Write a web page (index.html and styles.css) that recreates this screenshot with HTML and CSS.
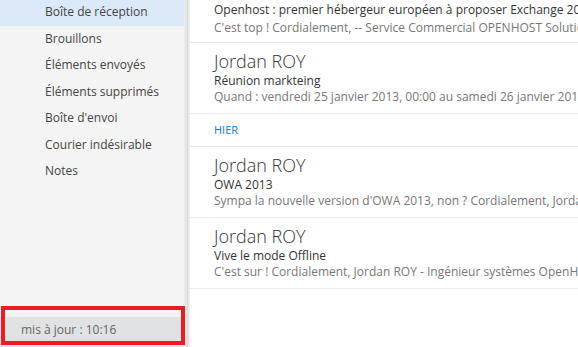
FILE: index.html
```html
<!DOCTYPE html>
<html lang="fr">
<head>
    <meta charset="UTF-8">
    <title>Outlook Web App</title>
    <link rel="stylesheet" href="styles.css">
</head>
<body>

<div class="sidebar">
    <ul class="folders">
        <li class="selected">Boîte de réception</li>
        <li>Brouillons</li>
        <li>Éléments envoyés</li>
        <li>Éléments supprimés</li>
        <li>Boîte d'envoi</li>
        <li>Courier indésirable</li>
        <li>Notes</li>
    </ul>
    <div class="status">mis à jour : 10:16</div>
    <div class="highlight-frame"></div>
</div>

<div class="splitter"></div>

<div class="messages">
    <!-- list is scrolled: the sender line of this one is above the fold -->
    <div class="message first">
        <div class="subject">Openhost : premier hébergeur européen à proposer Exchange 2013</div>
        <div class="preview">C'est top ! Cordialement, -- Service Commercial OPENHOST Solutions</div>
    </div>
    <div class="message">
        <div class="from">Jordan ROY</div>
        <div class="subject">Réunion markteing</div>
        <div class="preview">Quand : vendredi 25 janvier 2013, 00:00 au samedi 26 janvier 2013, 00:00</div>
    </div>
    <div class="group">HIER</div>
    <div class="message">
        <div class="from">Jordan ROY</div>
        <div class="subject">OWA 2013</div>
        <div class="preview">Sympa la nouvelle version d'OWA 2013, non ? Cordialement, Jordan ROY</div>
    </div>
    <div class="message">
        <div class="from">Jordan ROY</div>
        <div class="subject">Vive le mode Offline</div>
        <div class="preview">C'est sur ! Cordialement, Jordan ROY - Ingénieur systèmes OpenHost</div>
    </div>
</div>

</body>
</html>
```

FILE: styles.css
```css
body {
    margin: 0;
    height: 347px;
    display: flex;
    overflow: hidden;
    font-family: "Open Sans", "Noto Sans", sans-serif;
    background: #fff;
}

.sidebar {
    position: relative;
    width: 184px;
    background: #f4f4f4;
    display: flex;
    flex-direction: column;
    justify-content: space-between;
}
.folders {
    list-style: none;
    margin: -1px 0 0 0;
    padding: 0;
}
.folders li {
    height: 26.5px;
    line-height: 26px;
    padding-left: 45px;
    font-size: 12px;
    color: #444;
    white-space: nowrap;
}
.folders li.selected { background: #dce9f8; }

.status {
    margin-top: 7px;
    height: 30px;
    line-height: 26px;
    padding-left: 21px;
    background: #e1e2e4;
    font-size: 12px;
    color: #666;
}
.highlight-frame {
    position: absolute;
    left: 1px;
    top: 306px;
    width: 176px;
    height: 31px;
    border: 4px solid #ed1c24;
}

.splitter {
    width: 5px;
    background: linear-gradient(to right, #efefef, #e6e6e6 40%, #dadada 70%, #f3f3f3);
}

.messages {
    flex: 1;
    min-width: 0;
    overflow: hidden;
    border-left: 1px solid #ededed;
}
.message {
    height: 71px;
    padding: 7px 0 0 24px;
    box-sizing: border-box;
    border-bottom: 1px solid #ebebeb;
    white-space: nowrap;
}
.message.first { height: 43px; padding-top: 2px; }
.from {
    font-size: 18px;
    font-weight: 300;
    line-height: 23px;
    color: #333;
}
.subject {
    font-size: 12px;
    line-height: 16px;
    color: #333;
}
.preview {
    font-size: 12px;
    line-height: 16px;
    color: #777;
}
.message.first .preview { margin-top: 2px; }
.group {
    height: 33px;
    box-sizing: border-box;
    line-height: 32px;
    padding-left: 24px;
    font-size: 11px;
    color: #0f7bd1;
    border-bottom: 1px solid #ebebeb;
}
```
